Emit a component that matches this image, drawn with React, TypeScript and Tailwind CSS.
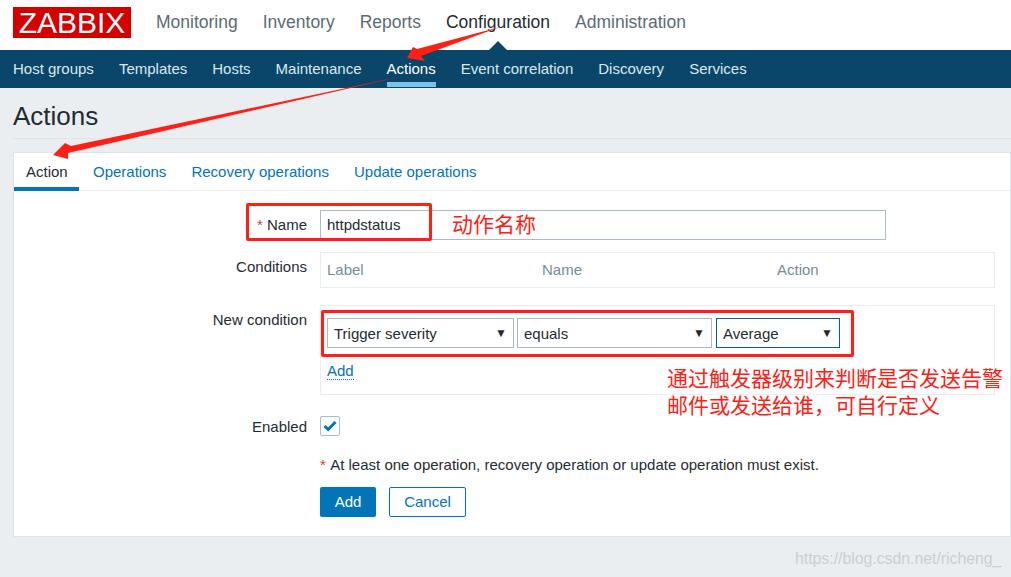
const mainMenu = ["Monitoring", "Inventory", "Reports", "Configuration", "Administration"];
const subMenu = ["Host groups", "Templates", "Hosts", "Maintenance", "Actions", "Event correlation", "Discovery", "Services"];
const tabs = ["Action", "Operations", "Recovery operations", "Update operations"];

const Label = ({ children, className = "" }: { children: React.ReactNode; className?: string }) => (
  <div className={`w-[306px] shrink-0 pr-[13px] text-right text-[15px] text-[#1f2c33] ${className}`}>{children}</div>
);

const Select = ({ value, className }: { value: string; className: string }) => (
  <div className={`flex h-[30px] items-center justify-between border pl-[6px] pr-[6px] text-[15px] text-[#1f2c33] ${className}`}>
    <span className="pt-[2px]">{value}</span>
    <span className="text-[12px] leading-none text-[#1f2c33]">▼</span>
  </div>
);

export default function App() {
  return (
    <div className="relative h-[577px] w-[1011px] overflow-hidden bg-[#ebeef0] font-['Liberation_Sans',sans-serif]">
      <header className="flex h-[50px] items-center bg-white pl-[13px]">
        <div className="mb-[5px] flex h-[31px] w-[118px] items-center justify-center bg-[#d40000] text-[30px] leading-none text-white">ZABBIX</div>
        <nav className="ml-[25px] flex gap-[25px] pb-[5px]">
          {mainMenu.map((item) => (
            <span key={item} className={`relative text-[17.5px] ${item === "Configuration" ? "text-[#1f2c33]" : "text-[#5b6b76]"}`}>
              {item}
              {item === "Configuration" && (
                <span className="absolute left-1/2 top-[32px] h-0 w-0 -translate-x-1/2 border-x-[10px] border-b-[10px] border-x-transparent border-b-[#0a466a]" />
              )}
            </span>
          ))}
        </nav>
      </header>

      <nav className="flex h-[38px] gap-[25px] bg-[#0a466a] pl-[13px]">
        {subMenu.map((item) => (
          <span
            key={item}
            className={`h-[37px] pt-[10px] text-[15px] leading-[18px] ${item === "Actions" ? "border-b-[5px] border-[#7dc2ed] text-white" : "text-[#dce8ef]"}`}
          >
            {item}
          </span>
        ))}
      </nav>

      <div className="ml-[13px] h-[51px] border-b border-[#dfe4e7] pt-[11px] text-[26px] leading-[34px] text-[#1f2c33]">Actions</div>

      <main className="ml-[13px] mt-[13px] h-[385px] border border-[#dfe4e7] bg-white">
        <div className="flex h-[38px] gap-[25px] border-b border-[#ebeef0]">
          {tabs.map((tab) => (
            <span
              key={tab}
              className={`h-[38px] pt-[9px] text-[15px] leading-[20px] ${tab === "Action" ? "mr-[-11px] w-[65px] border-b-[4px] border-[#0275b8] pl-[12px] text-[#1f2c33]" : "text-[#0275b8]"}`}
            >
              {tab}
            </span>
          ))}
        </div>

        <div className="flex pt-[19px]">
          <Label className="pt-[6px] leading-[18px]">
            <span className="text-[#e33734]">*</span> Name
          </Label>
          <div className="flex h-[30px] w-[566px] items-center border border-[#acbbc4] px-[6px] text-[15px] text-[#1f2c33]">httpdstatus</div>
        </div>

        <div className="mt-[12px] flex">
          <Label className="pt-[6px] leading-[18px]">Conditions</Label>
          <div className="flex h-[36px] w-[675px] items-center border border-[#ebeef0] pl-[6px] text-[15px] text-[#768d99]">
            <span className="w-[215px]">Label</span>
            <span className="w-[235px]">Name</span>
            <span>Action</span>
          </div>
        </div>

        <div className="mt-[17px] flex">
          <Label className="pt-[6px] leading-[18px]">New condition</Label>
          <div className="h-[90px] w-[675px] border border-[#ebeef0] pl-[6px] pt-[12px]">
            <div className="flex gap-[3px]">
              <Select value="Trigger severity" className="w-[187px] border-[#acbbc4]" />
              <Select value="equals" className="w-[195px] border-[#acbbc4]" />
              <Select value="Average" className="ml-px w-[124px] border-[#0a5f90]" />
            </div>
            <span className="mt-[14px] inline-block border-b border-dotted border-[#0275b8] text-[15px] leading-[17px] text-[#0275b8]">Add</span>
          </div>
        </div>

        <div className="mt-[21px] flex">
          <Label className="pt-[2px] leading-[18px]">Enabled</Label>
          <div className="flex h-[20px] w-[20px] items-center justify-center rounded-[2px] border border-[#acbbc4]">
            <svg width="14" height="12" viewBox="0 0 14 12">
              <path d="M1.5 6 L5.2 9.5 L12.5 2" fill="none" stroke="#0275b8" strokeWidth="3" />
            </svg>
          </div>
        </div>

        <div className="ml-[306px] mt-[19px] text-[15px] leading-[20px] text-[#1f2c33]">
          <span className="mr-px text-[#e33734]">*</span> At least one operation, recovery operation or update operation must exist.
        </div>

        <div className="ml-[306px] mt-[12px] flex gap-[13px]">
          <button className="h-[30px] w-[56px] rounded-[2px] bg-[#0275b8] text-[15px] text-white">Add</button>
          <button className="h-[30px] w-[77px] rounded-[2px] border border-[#0275b8] text-[15px] text-[#0275b8]">Cancel</button>
        </div>
      </main>

      {/* screenshot annotations drawn over the page */}
      <div className="absolute left-[246px] top-[203px] h-[38px] w-[186px] rounded-[2px] border-[3px] border-[#fe2015]" />
      <div className="absolute left-[321px] top-[310px] h-[47px] w-[533px] rounded-[2px] border-[3px] border-[#fe2015]" />
      <svg className="absolute left-0 top-0" width="1011" height="577" viewBox="0 0 1011 577">
        <polygon points="500,27 417,49 413,47 407,58 425,61 421,56" fill="#fe2015" />
        <polygon points="403,76 71,146 65,143 53,155 68,159 68,153" fill="#fe2015" />
      </svg>
      <div className="absolute left-[452px] top-[209px] font-['Noto_Sans_CJK_SC',sans-serif] text-[21px] leading-[28px] text-[#fe2015]">动作名称</div>
      <div className="absolute left-[667px] top-[364px] w-[344px] font-['Noto_Sans_CJK_SC',sans-serif] text-[21px] leading-[27px] text-[#fe2015]">
        <div className="whitespace-nowrap">通过触发器级别来判断是否发送告警</div>
        <div className="whitespace-nowrap">邮件或发送给谁，可自行定义</div>
      </div>
      <div className="absolute left-[795px] top-[549px] text-[15.8px] leading-[20px] text-[#c9ced2]">https://blog.csdn.net/richeng_</div>
    </div>
  );
}
